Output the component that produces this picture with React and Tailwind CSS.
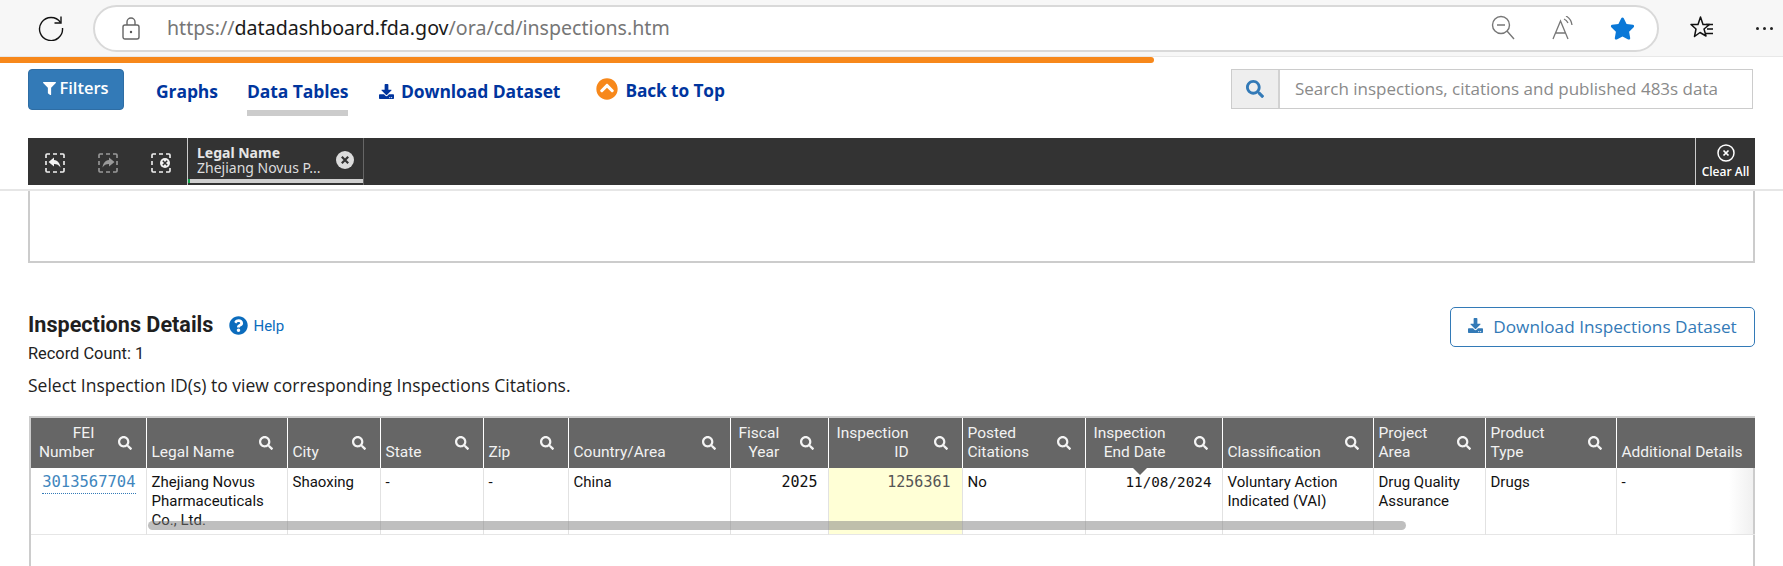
import React from "react";
import { FaFilter, FaSearch, FaDownload, FaChevronCircleUp, FaQuestionCircle, FaStar } from "react-icons/fa";

const cols = [
  { w: 115, h: ["FEI", "Number"], right: true, s: true },
  { w: 141, h: ["Legal Name"], s: true },
  { w: 93, h: ["City"], s: true },
  { w: 103, h: ["State"], s: true },
  { w: 85, h: ["Zip"], s: true },
  { w: 162, h: ["Country/Area"], s: true },
  { w: 98, h: ["Fiscal", "Year"], right: true, s: true },
  { w: 134, h: ["Inspection", "ID"], right: true, s: true },
  { w: 123, h: ["Posted", "Citations"], s: true },
  { w: 137, h: ["Inspection", "End Date"], right: true, s: true },
  { w: 151, h: ["Classification"], s: true },
  { w: 112, h: ["Project", "Area"], s: true },
  { w: 131, h: ["Product", "Type"], s: true },
  { w: 139, h: ["Additional Details"], s: false },
];

function SelIcon({ kind }) {
  const c = kind === "redo" ? "#9a9a9a" : "#f2f2f2";
  return (
    <svg width="20" height="20" viewBox="0 0 20 20" fill="none">
      <path d="M1 5V2a1 1 0 0 1 1-1h3M8 1h4M15 1h3a1 1 0 0 1 1 1v3M19 8v4M19 15v3a1 1 0 0 1-1 1h-3M12 19H8M5 19H2a1 1 0 0 1-1-1v-3M1 12V8" stroke={c} strokeWidth="1.6" />
      {kind === "undo" && <path d="M9 4.5 3.5 9 9 13.5V11c3 0 5 1 6.5 3.5C15 10.5 13 7.5 9 7Z" fill={c} />}
      {kind === "redo" && <path d="M11 4.5 16.5 9 11 13.5V11c-3 0-5 1-6.5 3.5C5 10.5 7 7.5 11 7Z" fill={c} />}
      {kind === "clear" && (
        <g>
          <circle cx="14" cy="10" r="6.5" fill="#333" />
          <circle cx="14" cy="10" r="5" fill="#f2f2f2" />
          <path d="m11.8 7.8 4.4 4.4m0-4.4-4.4 4.4" stroke="#333" strokeWidth="1.5" />
        </g>
      )}
    </svg>
  );
}

function XCircle({ size, filled }) {
  return filled ? (
    <svg width={size} height={size} viewBox="0 0 18 18">
      <circle cx="9" cy="9" r="9" fill="#dcdcdc" />
      <path d="m5.8 5.8 6.4 6.4m0-6.4-6.4 6.4" stroke="#333" strokeWidth="2.2" />
    </svg>
  ) : (
    <svg width={size} height={size} viewBox="0 0 18 18" fill="none">
      <circle cx="9" cy="9" r="8" stroke="#fff" strokeWidth="1.5" />
      <path d="m6.5 6.5 5 5m0-5-5 5" stroke="#fff" strokeWidth="1.7" />
    </svg>
  );
}

function Browser() {
  return (
    <div className="h-[57px] shrink-0 bg-[#f7f7f7] flex items-center border-b border-[#e8e8e8]">
      <div className="w-[93px] shrink-0 flex justify-center pl-[9px]">
        <svg width="26" height="26" viewBox="0 0 26 26" fill="none">
          <path d="M22.5 7.5A11.5 11.5 0 1 0 24.5 13" stroke="#111" strokeWidth="1.4" />
          <path d="M23 1.5v6.5h-6.5" stroke="#111" strokeWidth="1.4" />
        </svg>
      </div>
      <div className="w-[1566px] h-[47px] rounded-[24px] bg-white border-2 border-[#d9d9d9] flex items-center shrink-0">
        <svg width="18" height="24" viewBox="0 0 18 24" fill="none" className="ml-[27px]">
          <path d="M5 9V6a4 4 0 0 1 8 0v3" stroke="#666" strokeWidth="1.4" />
          <rect x="1" y="9" width="16" height="14" rx="2" stroke="#666" strokeWidth="1.4" />
          <circle cx="9" cy="16" r="1.2" fill="#555" />
        </svg>
        <div className="ml-[27px] text-[19.6px] text-[#767676] font-['Noto_Sans',sans-serif]">
          https://<span className="text-[#1a1a1a]">datadashboard.fda.gov</span>/ora/cd/inspections.htm
        </div>
        <div className="ml-auto flex items-center">
          <svg width="24" height="26" viewBox="0 0 24 26" fill="none">
            <circle cx="10" cy="10" r="8.5" stroke="#777" strokeWidth="1.4" />
            <path d="M6 10h8M16 16l7 8" stroke="#777" strokeWidth="1.4" />
          </svg>
          <svg width="24" height="24" viewBox="0 0 24 24" fill="none" className="ml-[37px]">
            <path d="M1 23 8.5 5 16 23M3.5 17h10" stroke="#777" strokeWidth="1.3" />
            <path d="M12 3a8 8 0 0 1 4 4M14 0a12 12 0 0 1 6 9" stroke="#777" strokeWidth="1.3" />
          </svg>
          <FaStar className="ml-[34px] mr-[22px]" size={25} color="#0a78d7" />
        </div>
      </div>
      <svg width="26" height="26" viewBox="0 0 26 26" fill="none" className="ml-[30px]">
        <path d="M11.5 2 14 9.5h6.5L15 14l2 7-6-3.5-5.5 4 1.5-7.5L2 9.5h7Z" stroke="#111" strokeWidth="1.5" strokeLinejoin="round" />
        <path d="M17 9.5h7M18 14h6M16 18.5h8" stroke="#111" strokeWidth="1.5" />
      </svg>
      <div className="ml-[41px] flex gap-[4px]">
        <span className="w-[3px] h-[3px] rounded-full bg-[#222]" />
        <span className="w-[3px] h-[3px] rounded-full bg-[#222]" />
        <span className="w-[3px] h-[3px] rounded-full bg-[#222]" />
      </div>
    </div>
  );
}

function Nav() {
  return (
    <div className="h-[75px] shrink-0 pt-[6px] flex items-start pl-[28px] font-['Open_Sans',sans-serif]">
      <div className="w-[96px] h-[41px] bg-[#337ab7] rounded-[4px] border border-[#2e6da4] text-white text-[16.5px] font-semibold flex items-center justify-center gap-[3px] pb-[2px]">
        <FaFilter size={13} />
        <span>Filters</span>
      </div>
      <div className="flex text-[#00359e] text-[17.5px] font-bold tracking-[-0.1px] leading-[22px] pt-[11px]">
        <div className="ml-[32px] w-[60px]">Graphs</div>
        <div className="ml-[31px] w-[101px] h-[36px] border-b-[6px] border-[#cccccc] whitespace-nowrap text-center">Data Tables</div>
        <div className="ml-[31px] flex items-center h-[22px] whitespace-nowrap">
          <FaDownload size={15} className="mr-[7px]" />
          Download Dataset
        </div>
        <div className="ml-[36px] flex items-center h-[22px] whitespace-nowrap text-[17.3px]">
          <FaChevronCircleUp size={22} color="#f7881b" className="mr-[7px] -mt-[5px]" />
          Back to Top
        </div>
      </div>
      <div className="ml-auto mr-[30px] w-[522px] h-[40px] flex border border-[#cccccc]">
        <div className="w-[48px] shrink-0 bg-[#eeeeee] border-r-2 border-[#d2d2d2] flex items-center justify-center">
          <FaSearch size={18} color="#337ab7" />
        </div>
        <div className="flex-1 pl-[15px] text-[17px] text-[#8a8a8a] flex items-center whitespace-nowrap">
          Search inspections, citations and published 483s data
        </div>
      </div>
    </div>
  );
}

function FilterBar() {
  return (
    <div className="mx-[28px] h-[47px] shrink-0 bg-[#333333] flex text-white">
      <div className="w-[159px] shrink-0 flex items-center pl-[17px] gap-[33px] pt-[2px]">
        <SelIcon kind="undo" />
        <SelIcon kind="redo" />
        <SelIcon kind="clear" />
      </div>
      <div className="w-[177px] shrink-0 border-l border-r border-l-[#cccccc] border-r-[#666666] flex flex-col font-['Noto_Sans',sans-serif]">
        <div className="flex-1 flex items-center pl-[9px] pr-[9px] justify-between pt-[3px]">
          <div className="text-[14px] leading-[15px]">
            <div className="font-bold text-[#e6e6e6]">Legal Name</div>
            <div className="text-[#dddddd] whitespace-nowrap">Zhejiang Novus P...</div>
          </div>
          <XCircle size={18} filled />
        </div>
        <div className="h-[4px] mb-[2px] bg-[#cfcfcf] flex">
          <div className="w-[2px] bg-[#14a44d]" />
        </div>
      </div>
      <div className="flex-1" />
      <div className="w-[60px] shrink-0 border-l border-[#cccccc] flex flex-col items-center pt-[6px] font-['Open_Sans',sans-serif]">
        <XCircle size={18} />
        <div className="text-[12px] font-semibold leading-[16px] mt-[2px] whitespace-nowrap">Clear All</div>
      </div>
    </div>
  );
}

function Head({ c }) {
  return (
    <th className="p-0 border-l border-white first:border-l-0 font-normal">
      <div className="h-[50px] flex justify-between">
        <div className={`self-end pb-[6px] text-[15.5px] leading-[19px] text-[#f2f2f2] whitespace-nowrap ${c.right ? "text-right pl-[8px]" : "text-left pl-[5px]"}`}>
          {c.h.map((l) => (
            <div key={l}>{l}</div>
          ))}
        </div>
        {c.s && <FaSearch size={14} color="#f4f4f4" className="self-center mr-[14px] shrink-0" />}
      </div>
    </th>
  );
}

function Table() {
  const td = "align-top pt-[5px] px-[5px] border-l border-[#e2e2e2] first:border-l-0 leading-[19px]";
  const mono = "font-['DejaVu_Sans_Mono',monospace]";
  return (
    <div className="ml-[29px] mt-[20px] w-[1726px] flex-1 border-x-2 border-t-2 border-[#cccccc] relative font-['Roboto',sans-serif] text-[15px] text-[#111]">
      <table className="table-fixed w-[1724px] border-collapse">
        <colgroup>
          {cols.map((c) => (
            <col key={c.w + c.h[0]} style={{ width: c.w }} />
          ))}
        </colgroup>
        <thead>
          <tr className="bg-[#666666]">
            {cols.map((c) => (
              <Head key={c.w + c.h[0]} c={c} />
            ))}
          </tr>
        </thead>
        <tbody>
          <tr className="h-[66px] border-b border-[#e6e6e6]">
            <td className={`${td} text-right pr-[10px] ${mono}`}>
              <span className="text-[15.5px] text-[#3f86bd] border-b border-dotted border-[#337ab7] pb-[2px]">3013567704</span>
            </td>
            <td className={td}>Zhejiang Novus Pharmaceuticals Co., Ltd.</td>
            <td className={td}>Shaoxing</td>
            <td className={td}>-</td>
            <td className={td}>-</td>
            <td className={td}>China</td>
            <td className={`${td} text-right pr-[10px] ${mono}`}>2025</td>
            <td className={`${td} text-right pr-[11px] bg-[#ffffd6] text-[#555555] ${mono}`}>1256361</td>
            <td className={td}>No</td>
            <td className={`${td} text-right pr-[10px] text-[14.3px] whitespace-nowrap ${mono}`}>11/08/2024</td>
            <td className={td}>Voluntary Action Indicated (VAI)</td>
            <td className={td}>Drug Quality Assurance</td>
            <td className={td}>Drugs</td>
            <td className={td}>-</td>
          </tr>
        </tbody>
      </table>
      <div className="absolute left-[1102px] top-[50px] w-0 h-0 border-x-[7px] border-x-transparent border-t-[7px] border-t-[#666666]" />
      <div className="absolute right-0 top-[50px] h-[66px] w-[24px] bg-gradient-to-r from-transparent to-[#f0f0f0]" />
      <div className="absolute left-[117px] top-[103px] w-[1258px] h-[9px] rounded-full bg-[#808080]/50" />
    </div>
  );
}

export default function App() {
  return (
    <div className="w-[1783px] h-[566px] overflow-hidden bg-white flex flex-col">
      <Browser />
      <div className="h-[6px] w-[1154px] shrink-0 bg-[#f7881b] rounded-r-[3px]" />
      <Nav />
      <FilterBar />
      <div className="h-[6px] shrink-0 border-b-2 border-[#e6e6e6]" />
      <div className="mx-[28px] h-[72px] shrink-0 border-2 border-t-0 border-[#cccccc]" />
      <div className="px-[28px] mt-[44px] flex justify-between items-start shrink-0">
        <div>
          <div className="mt-[4px] flex items-center h-[28px]">
            <h2 className="text-[21.6px] font-bold text-[#1f1f1f] font-['Roboto',sans-serif]">Inspections Details</h2>
            <FaQuestionCircle size={19} color="#0b6cbd" className="ml-[16px]" />
            <span className="ml-[5px] mt-[3px] text-[15px] text-[#0b6cbd] font-['Roboto',sans-serif]">Help</span>
          </div>
          <div className="mt-[5px] h-[20px] leading-[20px] text-[16.4px] text-[#222] font-['Roboto',sans-serif]">Record Count: 1</div>
          <div className="mt-[10px] h-[22px] leading-[22px] text-[17.5px] text-[#222] font-['Open_Sans',sans-serif] whitespace-nowrap">
            Select Inspection ID(s) to view corresponding Inspections Citations.
          </div>
        </div>
        <div className="w-[305px] h-[40px] border border-[#337ab7] rounded-[5px] flex items-center justify-center text-[#337ab7] text-[17.2px] font-['Open_Sans',sans-serif]">
          <FaDownload size={15} className="mr-[10px] -mt-[3px]" />
          Download Inspections Dataset
        </div>
      </div>
      <Table />
    </div>
  );
}
